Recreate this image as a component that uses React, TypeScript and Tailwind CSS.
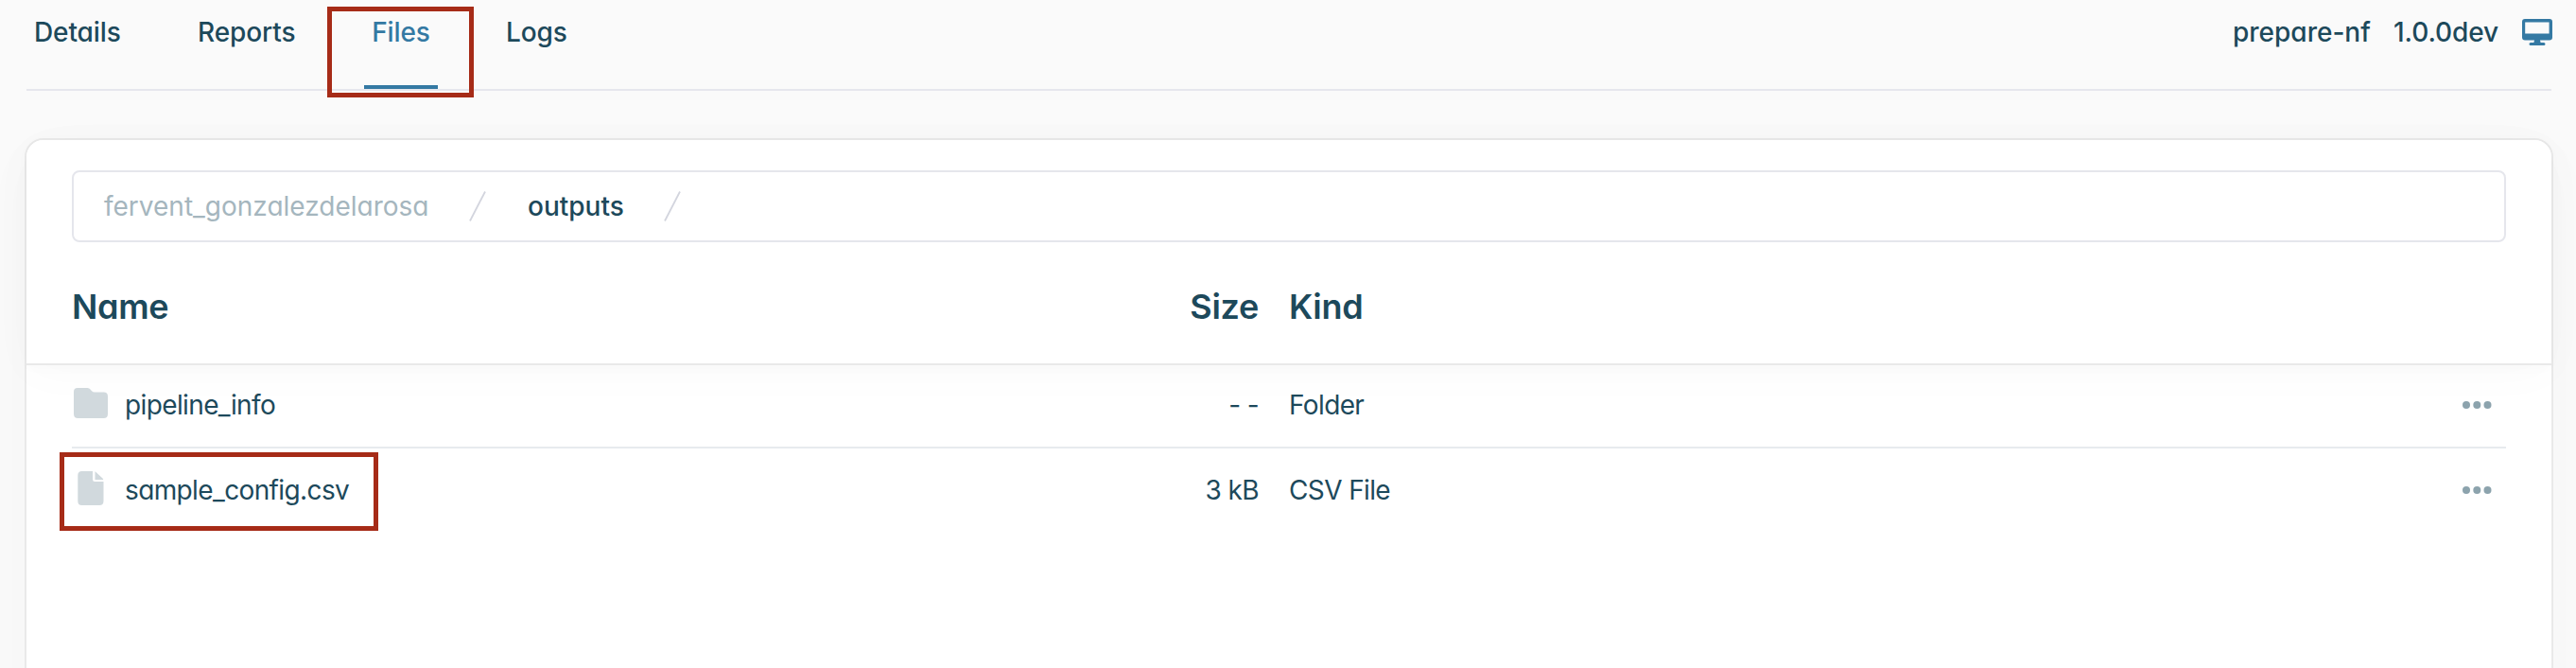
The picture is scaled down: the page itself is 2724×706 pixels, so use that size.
import type { ReactNode } from "react";

const tabs = [
  { label: "Details", className: "w-[174px] pl-[8px]" },
  { label: "Reports", className: "w-[183px] pl-[7px]" },
  { label: "Files", className: "w-[78px] justify-center text-[#3479a3]", active: true },
  { label: "Logs", className: "w-[138px] pl-[72px]" },
];

function Tabs() {
  return (
    <header className="ml-[28px] mr-[26px] flex h-[96px] justify-between border-b-2 border-[#e6e7ed] font-medium">
      <nav className="flex">
        {tabs.map((tab) => (
          <div key={tab.label} className={`relative flex h-[94px] pt-[17px] ${tab.className}`}>
            <span className="tracking-[-0.1px]">{tab.label}</span>
            {tab.active && (
              <>
                <span className="absolute bottom-0 left-0 h-[4px] w-full bg-[#3479a3]" />
                <span className="absolute -left-[39px] top-[7px] h-[96px] w-[155px] border-[5px] border-[#a62b17]" />
              </>
            )}
          </div>
        ))}
      </nav>
      <div className="flex pt-[17px]">
        <span className="w-[170px]">prepare-nf</span>
        <span className="w-[136px] tracking-[-0.1px]">1.0.0dev</span>
        <svg className="-mr-px mt-[3px] h-[28px] w-[32px]" viewBox="0 0 32 28" fill="#3479a3">
          <path
            fillRule="evenodd"
            d="M3 0H29A3 3 0 0 1 32 3V19.500A3 3 0 0 1 29 22.500H19L19.600 25H23A1.500 1.500 0 0 1 23 28H9A1.500 1.500 0 0 1 9 25H12.400L13 22.500H3A3 3 0 0 1 0 19.500V3A3 3 0 0 1 3 0ZM3.200 3.600V15.600H28.600V3.600Z"
          />
        </svg>
      </div>
    </header>
  );
}

function Slash() {
  return (
    <svg className="h-[32px] w-[18px]" viewBox="0 0 18 32">
      <path d="M1 31.500L17 0.500" stroke="#d3d5de" strokeWidth="1.800" />
    </svg>
  );
}

function FolderIcon() {
  return (
    <svg className="h-[36px] w-[36px]" viewBox="0 0 36 36" fill="#d1d9dd">
      <path d="M4 2H14.500Q16.500 2 17.500 3.500L19 5.300Q20.200 6.600 22 6.600H31.500Q36 6.600 36 11V29.500Q36 34 31.500 34H4.500Q0 34 0 29.500V6Q0 2 4 2Z" />
    </svg>
  );
}

function FileIcon() {
  return (
    <svg className="h-[36px] w-[36px]" viewBox="0 0 36 36" fill="#d1d9dd">
      <path d="M8.500 0H20V8.800Q20 11 22.200 11H31.500V31.500Q31.500 36 27 36H8.500Q4.300 36 4.300 31.500V4.500Q4.300 0 8.500 0Z" />
      <path d="M22.500 0.300Q23.200 0.600 24 1.400L30.200 7.300Q31 8.100 31.300 8.900H22.500Z" />
    </svg>
  );
}

function Dots() {
  return (
    <svg className="h-[8px] w-[32px]" viewBox="0 0 32 8" fill="#8ca3ad">
      <circle cx="4" cy="4" r="4" />
      <circle cx="15.300" cy="4" r="4" />
      <circle cx="26.500" cy="4" r="4" />
    </svg>
  );
}

interface RowProps {
  icon: ReactNode;
  name: string;
  size: string;
  kind: string;
  marked?: boolean;
}

function Row({ icon, name, size, kind, marked }: RowProps) {
  return (
    <div
      className={
        marked
          ? "relative mx-[48px] flex h-[90px] items-center pb-[2px] tracking-[-0.62px]"
          : "relative mx-[48px] flex h-[88px] items-center border-b-2 border-[#e7ebee] pb-[2px] tracking-[-0.62px]"
      }
    >
      {marked && <span className="absolute -left-[13px] top-[4px] h-[83px] w-[337px] border-[5px] border-[#a62b17]" />}
      <div className="flex w-[1058px] items-center">
        <div className="ml-[2px] w-[54px] pb-[4px]">{icon}</div>
        <span>{name}</span>
      </div>
      <span className="w-[197px] text-right">{size}</span>
      <span className="ml-[32px] flex-1">{kind}</span>
      <div className="mr-[14px]">
        <Dots />
      </div>
    </div>
  );
}

export default function App() {
  return (
    <div className="h-[706px] overflow-hidden bg-[#fafafa] font-['Inter',sans-serif] text-[28px] leading-[34px] text-[#1d495b] [font-feature-settings:'cv11']">
      <Tabs />
      <main className="ml-[26px] mr-[24px] mt-[50px] h-[700px] rounded-[20px] border-2 border-[#e9e9e9] bg-white shadow-[0_14px_60px_rgba(0,0,0,0.025)]">
        <div className="h-[238px] rounded-t-[18px] border-b-2 border-[#e9e9e9] bg-white px-[48px] pt-[32px] shadow-[0_2px_16px_rgba(0,0,0,0.02),0_8px_50px_rgba(0,0,0,0.025)]">
          <div className="flex h-[76px] items-center rounded-[8px] border-2 border-[#e5e6ec] pl-[32px]">
            <span className="w-[386px] text-[#a5b6be]">fervent_gonzalezdelarosa</span>
            <Slash />
            <span className="ml-[44px] w-[144px] font-medium">outputs</span>
            <Slash />
          </div>
          <div className="mt-[46px] flex text-[36px] font-semibold leading-[44px] tracking-[-0.3px]">
            <span className="w-[1058px]">Name</span>
            <span className="w-[197px] text-right">Size</span>
            <span className="ml-[32px]">Kind</span>
          </div>
        </div>
        <Row icon={<FolderIcon />} name="pipeline_info" size="- -" kind="Folder" />
        <Row icon={<FileIcon />} name="sample_config.csv" size="3 kB" kind="CSV File" marked />
      </main>
    </div>
  );
}
